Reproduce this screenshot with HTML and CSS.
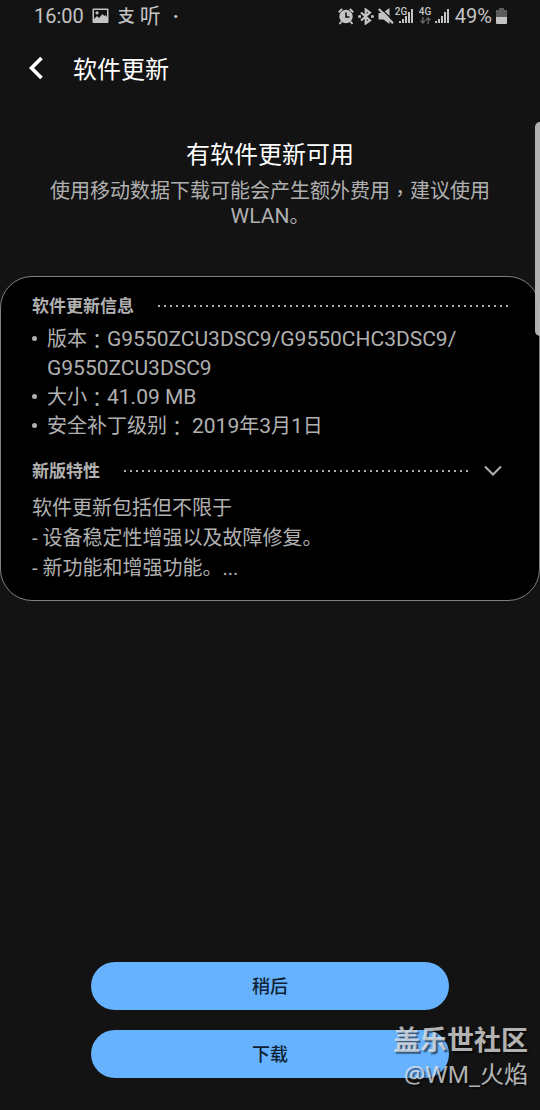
FILE: index.html
```html
<!DOCTYPE html>
<html lang="zh-CN">
<head>
<meta charset="utf-8">
<meta name="viewport" content="width=device-width, initial-scale=1">
<title>软件更新</title>
<link rel="stylesheet" href="styles.css">
</head>
<body>
<header class="status">
  <div class="status-left">
    <span>16:00</span>
    <svg class="ico-picture" width="17" height="16" viewBox="0 0 17 16" aria-hidden="true"><path fill="currentColor" fill-rule="evenodd" d="M1.500 0.500h14a1 1 0 0 1 1 1v12.500a1 1 0 0 1-1 1h-14a1 1 0 0 1-1-1v-12.500a1 1 0 0 1 1-1zM2 2v9l3-3 2 2L10.500 6l1.700 2L13.500 7l1.500 2V2z"/><circle cx="5" cy="4.800" r="1.600" fill="currentColor"/></svg>
    <span class="app-pay">支</span>
    <span class="app-listen">听</span>
    <span class="app-more">·</span>
  </div>
  <div class="status-right">
    <svg width="16" height="17" viewBox="0 0 16 17" fill="none" stroke="currentColor" aria-hidden="true"><circle cx="8" cy="8.500" r="6.700" fill="currentColor" stroke="none"/><path stroke-width="2" d="M0.800 4.200 4.200 0.900M15.200 4.200 11.800 0.900M3.500 13.500 1.500 16M12.500 13.500l2 2.500"/><path class="clock-hands" stroke-width="1.600" d="M8 4.500v4.500h3.500"/></svg>
    <svg class="ico-bluetooth" width="16" height="17" viewBox="0 0 16 17" fill="none" stroke="currentColor" aria-hidden="true"><path stroke-width="2.200" d="M3 4.500l9 8-4.300 3V1.500L12 4.500l-9 8"/><path stroke-width="2.600" d="M0.200 8.500h2.800M13 8.500h2.800"/></svg>
    <svg class="ico-mute" width="16" height="17" viewBox="0 0 16 17" aria-hidden="true"><path fill="currentColor" d="M0.500 5h4L11.500 0v16L5.500 11.500h-5z"/><path class="mute-gap" stroke-width="1.200" d="M2.600 0 16 13.400"/><path stroke="currentColor" stroke-width="2.200" d="M0.800 1 15 15.200"/></svg>
    <span class="signal sim-one">
      <span class="net">2G</span>
      <svg width="14" height="16" viewBox="0 0 14 16" aria-hidden="true"><path fill="currentColor" d="M0 13h2v2H0zM3 11h2v4H3zM6 8h2v7H6zM9 4h2v11H9zM12 1h2v14h-2z"/></svg>
    </span>
    <span class="signal sim-two">
      <span class="net">4G</span>
      <svg class="arrows" width="11" height="7" viewBox="0 0 11 7" fill="none" stroke="#666" stroke-width="1.400" aria-hidden="true"><path d="M2.800 0v5.500M0.500 3.500l2.300 2.500 2.300-2.500M8.200 7V1.200M5.900 3.300 8.200 0.900l2.300 2.400"/></svg>
      <svg width="14" height="16" viewBox="0 0 14 16" aria-hidden="true"><path fill="currentColor" d="M0 13h2v2H0zM3 11h2v4H3zM6 8h2v7H6zM9 4h2v11H9zM12 1h2v14h-2z"/></svg>
    </span>
    <span class="percent">49%</span>
    <svg width="11" height="17" viewBox="0 0 11 17" aria-hidden="true"><path fill="#5c5c5c" d="M3 0h5v2h3v8H0V2h3z"/><path fill="currentColor" d="M0 9h11v6a1 1 0 0 1-1 1H1a1 1 0 0 1-1-1z"/></svg>
  </div>
</header>

<nav class="topbar">
  <button class="back" type="button" aria-label="返回"><svg width="16" height="24" viewBox="0 0 16 24" fill="none" stroke="currentColor" stroke-width="3.600"><path d="M13.500 2 3.500 12l10 10"/></svg></button>
  <h1 class="title">软件更新</h1>
</nav>

<main class="content">
  <section class="intro">
    <h2 class="headline">有软件更新可用</h2>
    <p class="notice">使用移动数据下载可能会产生额外费用<span class="mid" lang="zh-TW">，</span>建议使用 <span class="latin">WLAN</span>。</p>
  </section>

  <section class="card">
    <div class="section-head">
      <h3 class="section-title">软件更新信息</h3>
      <span class="dots"></span>
    </div>
    <ul class="facts">
      <li>版本<span class="mid" lang="zh-TW">：</span><span class="latin">G9550ZCU3DSC9/<wbr>G9550CHC3DSC9/<wbr>G9550ZCU3DSC9</span></li>
      <li>大小<span class="mid" lang="zh-TW">：</span><span class="latin">41.09 MB</span></li>
      <li>安全补丁级别<span class="mid" lang="zh-TW">：</span> <span class="latin">2019</span>年<span class="latin">3</span>月<span class="latin">1</span>日</li>
    </ul>
    <div class="section-head">
      <h3 class="section-title">新版特性</h3>
      <span class="dots"></span>
      <button class="expand" type="button" aria-label="展开"><svg width="20" height="12" viewBox="0 0 20 12" fill="none" stroke="currentColor" stroke-width="2"><path d="M2 1.500l8 8 8-8"/></svg></button>
    </div>
    <p class="notes">软件更新包括但不限于<br>- 设备稳定性增强以及故障修复。<br>- 新功能和增强功能。...</p>
  </section>
</main>

<footer class="actions">
  <button class="action" type="button">稍后</button>
  <button class="action" type="button">下载</button>
</footer>

<div class="edge-handle"></div>
<div class="watermark">
  <span class="mark-site">盖乐世社区</span>
  <span class="mark-user">@WM_火焰</span>
</div>
</body>
</html>
```
FILE: styles.css
```css
* { box-sizing: border-box; }

body {
  position: relative;
  display: flex;
  flex-direction: column;
  min-height: 100vh;
  margin: 0;
  background: #131313;
  color: #b0b0b0;
  font-family: Roboto, "Noto Sans CJK SC", sans-serif;
  font-size: 20px;
  line-height: 30px;
}

h1, h2, h3, p, ul { margin: 0; padding: 0; }
svg { display: block; flex: none; }

button {
  padding: 0;
  border: 0;
  background: none;
  color: inherit;
  font: inherit;
  cursor: pointer;
}

/* Full-width punctuation centred in its cell */
.mid {
  font-family: "Noto Sans CJK TC", sans-serif;
  line-height: 1;
  vertical-align: -3px;
}
.latin { font-size: 21px; line-height: 1; }

/* Status bar */
.status {
  display: flex;
  justify-content: space-between;
  height: 32px;
  padding: 0 33px 0 34px;
  color: #c4c4c4;
  line-height: 32px;
}
.status-left, .status-right { display: flex; align-items: center; }
.ico-picture { margin-left: 8px; }
.app-pay { margin-left: 9px; font-size: 17px; font-weight: 500; }
.app-listen { margin-left: 5px; font-size: 21px; }
.app-more { margin-left: 12px; font-weight: 700; }
.clock-hands { stroke: #131313; }
.mute-gap { stroke: #131313; }
.ico-bluetooth, .ico-mute { margin-left: 4px; }
.signal { position: relative; display: flex; justify-content: flex-end; }
.sim-one { width: 19px; }
.sim-two { width: 36px; }
.sim-two .net { left: 6px; }
.net {
  position: absolute;
  top: 0;
  left: 1px;
  background: #131313;
  font-size: 10px;
  font-weight: 500;
  line-height: 8px;
}
.arrows { position: absolute; left: 7px; bottom: 0; }
.percent { margin: 0 4px 0 6px; }

/* Title bar */
.topbar {
  display: flex;
  align-items: center;
  gap: 29px;
  height: 72px;
  padding: 0 28px;
  color: #fff;
}
.title { padding-top: 4px; font-size: 24px; font-weight: 400; line-height: 32px; }

/* Introduction */
.content { flex: 1; }
.intro { padding: 35px 40px 47px; text-align: center; }
.headline { color: #fff; font-size: 24px; font-weight: 400; line-height: 32px; }
.notice { padding-top: 8px; line-height: 25px; }

/* Update details */
.card {
  padding: 14px 31px 17px;
  border: 1px solid #808080;
  border-radius: 32px;
  background: #000;
}
.section-head { display: flex; align-items: center; height: 30px; }
.section-title { font-size: 17px; font-weight: 700; line-height: 30px; }
.dots {
  flex: 1;
  height: 2px;
  margin-left: 24px;
  background: repeating-linear-gradient(90deg, #b0b0b0 0 2px, transparent 2px 6px);
}
.facts { padding: 4px 0 15px; list-style: none; line-height: 29px; }
.facts li { position: relative; padding-left: 15px; }
.facts li::before {
  content: "";
  position: absolute;
  top: 11px;
  left: 0;
  width: 5px;
  height: 5px;
  border-radius: 50%;
  background: #b0b0b0;
}
.expand { margin: 0 5px 0 14px; }
.notes { padding-top: 7px; }

/* Buttons */
.actions {
  display: flex;
  flex-direction: column;
  gap: 20px;
  padding: 0 91px 32px;
}
.action {
  height: 48px;
  padding-top: 2px;
  border-radius: 24px;
  background: #66b2ff;
  color: #0f2233;
  font-size: 18px;
  font-weight: 500;
}

/* Overlays */
.edge-handle {
  position: absolute;
  top: 122px;
  right: 0;
  width: 5px;
  height: 214px;
  border-radius: 5px 0 0 5px;
  background: rgba(190, 190, 190, 0.92);
}
.watermark {
  position: absolute;
  right: 12px;
  bottom: 20px;
  display: flex;
  flex-direction: column;
  align-items: flex-end;
  color: rgba(225, 225, 225, 0.8);
  font-family: "Noto Sans", "Noto Sans CJK SC", sans-serif;
  text-shadow: 2px 2px 1px rgba(0, 0, 0, 0.5);
  pointer-events: none;
}
.mark-site { font-size: 27px; font-weight: 700; line-height: 36px; }
.mark-user { font-size: 24px; line-height: 32px; }
```
